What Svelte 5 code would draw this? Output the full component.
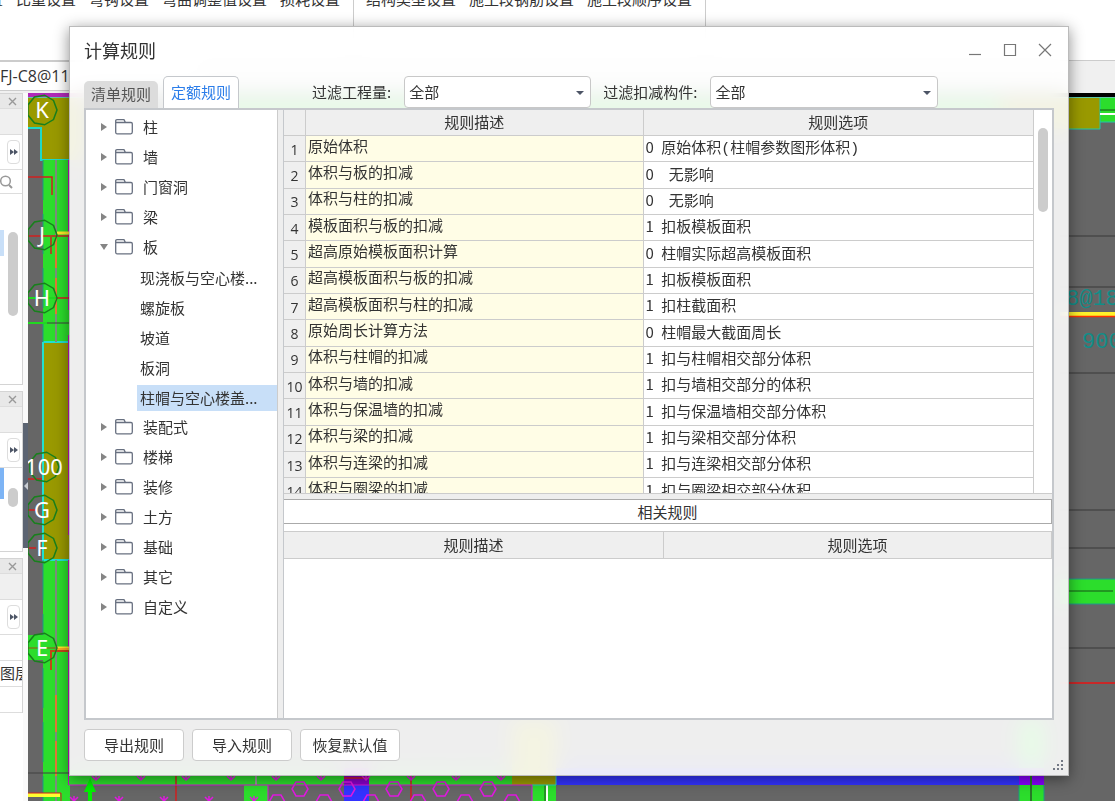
<script>
  // --- Ribbon behind the dialog ---
  const ribbonGroups = [
    ['置', '比重设置', '弯钩设置', '弯曲调整值设置', '损耗设置'],
    ['结构类型设置', '施工段钢筋设置', '施工段顺序设置']
  ];

  // --- Dialog state ---
  let activeTab = $state('定额规则');
  let quantity = $state('全部');
  let component = $state('全部');
  let selected = $state('柱帽与空心楼盖...');

  const tabs = ['清单规则', '定额规则'];
  const footer = ['导出规则', '导入规则', '恢复默认值'];

  let tree = $state([
    { name: '柱' },
    { name: '墙' },
    { name: '门窗洞' },
    { name: '梁' },
    {
      name: '板',
      open: true,
      children: ['现浇板与空心楼...', '螺旋板', '坡道', '板洞', '柱帽与空心楼盖...']
    },
    { name: '装配式' },
    { name: '楼梯' },
    { name: '装修' },
    { name: '土方' },
    { name: '基础' },
    { name: '其它' },
    { name: '自定义' }
  ]);

  // description, option code, indent of the option in half characters, option
  const rules = [
    ['原始体积', 0, 1, '原始体积(柱帽参数图形体积)'],
    ['体积与板的扣减', 0, 2, '无影响'],
    ['体积与柱的扣减', 0, 2, '无影响'],
    ['模板面积与板的扣减', 1, 1, '扣板模板面积'],
    ['超高原始模板面积计算', 0, 1, '柱帽实际超高模板面积'],
    ['超高模板面积与板的扣减', 1, 1, '扣板模板面积'],
    ['超高模板面积与柱的扣减', 1, 1, '扣柱截面积'],
    ['原始周长计算方法', 0, 1, '柱帽最大截面周长'],
    ['体积与柱帽的扣减', 1, 1, '扣与柱帽相交部分体积'],
    ['体积与墙的扣减', 1, 1, '扣与墙相交部分的体积'],
    ['体积与保温墙的扣减', 1, 1, '扣与保温墙相交部分体积'],
    ['体积与梁的扣减', 1, 1, '扣与梁相交部分体积'],
    ['体积与连梁的扣减', 1, 1, '扣与连梁相交部分体积'],
    ['体积与圈梁的扣减', 1, 1, '扣与圈梁相交部分体积']
  ];

  // --- Drawing ---
  const axes = [
    { name: 'K', x: 42, y: 110 },
    { name: 'J', x: 42, y: 235 },
    { name: 'H', x: 42, y: 298 },
    { name: '100', x: 44, y: 467 },
    { name: 'G', x: 42, y: 510 },
    { name: 'F', x: 42, y: 548 },
    { name: 'E', x: 42, y: 648 }
  ];
  const gridLines = [236, 287, 373, 510, 548, 648];

  function polygon(cx, cy, r, sides) {
    return Array.from({ length: sides }, (_, i) => {
      const a = (i * 2 * Math.PI) / sides;
      return `${(cx + r * Math.cos(a)).toFixed(1)},${(cy + r * Math.sin(a)).toFixed(1)}`;
    }).join(' ');
  }

  function pick(node) {
    if (node.children) node.open = !node.open;
    else selected = node.name;
  }
</script>

{#snippet panelTop()}
  <div class="panel-head">
    <button aria-label="关闭面板">
      <svg width="9" height="9" viewBox="0 0 9 9"><path d="M1 1l7 7M8 1L1 8" stroke="#999" stroke-width="1.4" fill="none" /></svg>
    </button>
  </div>
  <div class="panel-tabs"></div>
  <div class="panel-tools">
    <button aria-label="更多">
      <svg width="10" height="8" viewBox="0 0 10 8"><path d="M1 1l4 3-4 3zM5 1l4 3-4 3z" fill="#4d5566" /></svg>
    </button>
  </div>
{/snippet}

<div class="desktop">
  <div class="ribbon">
    {#each ribbonGroups as group}
      <div class="group">
        {#each group as item}
          <span>{item}</span>
        {/each}
      </div>
    {/each}
  </div>

  <div class="doc-tabs"><span>FJ-C8@11</span></div>

  <div class="workspace">
    <aside>
      <section class="panel tall">
        {@render panelTop()}
        <div class="search">
          <svg width="14" height="14" viewBox="0 0 14 14" fill="none" stroke="#999">
            <circle cx="5.500" cy="6" r="4.800" stroke-width="1.500" /><path d="M9 10l3 3" stroke-width="2" />
          </svg>
        </div>
        <div class="list first"><i class="mark"></i><i class="thumb"></i></div>
      </section>
      <section class="panel middle">
        {@render panelTop()}
        <div class="list"><i class="mark strong"></i><i class="thumb short"></i></div>
      </section>
      <section class="panel last">
        {@render panelTop()}
        <div class="layer"></div>
        <div class="layer">图层</div>
        <div class="layer"></div>
      </section>
    </aside>
    <div class="gutter">
      <div class="handle">
        <svg width="5" height="8" viewBox="0 0 5 8"><path d="M5 0v8L1 4z" fill="#c8ccd2" /></svg>
      </div>
    </div>

    <div class="drawing">
      <svg viewBox="28 93 1087 708" preserveAspectRatio="xMinYMin slice">
        <rect x="28" y="93" width="1087" height="708" fill="#666" />

        <!-- top band -->
        <rect x="28" y="93" width="1087" height="4" fill="#000" />
        <rect x="28" y="93" width="60" height="4" fill="#b02ab8" />
        <rect x="28" y="97" width="1087" height="2" fill="#5fc9a8" />
        <rect x="200" y="98" width="820" height="26" fill="#2cdd2c" />
        <path d="M28 98H84V160H41V128H28z" fill="#999900" />
        <path d="M28 128H41V160H69" fill="none" stroke="#1fd8c8" stroke-width="2" />

        <!-- left wall -->
        <rect x="43" y="160" width="27" height="182" fill="#2cdd2c" />
        <rect x="43" y="342" width="27" height="218" fill="#999900" />
        <rect x="43" y="560" width="27" height="241" fill="#2cdd2c" />
        <path d="M43 342V560H69M43 342H69" fill="none" stroke="#20e0d0" stroke-width="2" />
        <path d="M43 160V342M43 560V801" stroke="#1a9a80" stroke-dasharray="40 14" />
        <path d="M56 160V342M56 560V801" stroke="#7d8d7d" stroke-width="2" />
        <path d="M56 237V268M56 278V314M56 695V732M56 741V776" stroke="#e07838" stroke-width="2" />
        <path d="M69 160V310M69 335V535M69 560V785" stroke="#c010c0" stroke-width="2" />
        <path d="M28 177H52V195M51 237V254M28 479H42M28 510H36M28 548H36" fill="none" stroke="#d02020" stroke-width="1.5" />
        <path d="M28 298H57M28 323H47" stroke="#20d820" stroke-width="2" />
        <path d="M47 323H69M28 773H69" stroke="#404040" />
        <path d="M57 233H69" stroke="#ffe928" stroke-width="3" />
        <path d="M28 236H69M57 298H69" stroke="#d02020" stroke-width="1.5" />
        <rect x="28" y="635" width="16" height="25" fill="#2cdd2c" />
        <path d="M28 648H57" stroke="#9a5010" />
        <path d="M57 649H69" stroke="#ffe928" stroke-width="5" />
        <path d="M57 649H69" stroke="#f07020" />
        <path d="M51 670V651H69" fill="none" stroke="#c04818" stroke-width="2" />
        <path d="M28 795H60" stroke="#ffff30" stroke-width="4" />
        <path d="M28 793H61V801" fill="none" stroke="#d02020" />

        {#each axes as axis}
          <polygon points={polygon(axis.x, axis.y, 15, 9)} fill="none" stroke="#18801c" stroke-width="1.5" />
          <text class="axis" x={axis.x} y={axis.y + 8}>{axis.name}</text>
        {/each}

        <!-- right side -->
        <rect x="1000" y="98" width="100" height="31" fill="#999900" />
        <rect x="1100" y="98" width="15" height="24" fill="#2cdd2c" />
        <path d="M1100 98V129H1069M1100 122H1115" fill="none" stroke="#1fc8a8" />
        <path d="M1100 110H1115" stroke="#175217" />
        <path d="M1100 114H1115" stroke="#fff" stroke-width="2" />
        <rect x="1060" y="579" width="55" height="25" fill="#2cdd2c" />
        <path d="M1069 579H1115M1069 604H1115" stroke="#20988a" />
        <path d="M1069 591H1113" stroke="#175217" />
        {#each gridLines as y}
          <path d="M1060 {y}H1115" stroke="#383838" />
        {/each}
        <path d="M1060 314H1115" stroke="#fff22a" stroke-width="4" />
        <path d="M1060 316.500H1115" stroke="#ff3000" stroke-width="1.500" />
        <path d="M1060 683H1115" stroke="#c82828" stroke-width="2" />
        <text class="note" x="1066" y="305">8@18</text>
        <text class="note" x="1082" y="348">900</text>

        <!-- bottom band -->
        <rect x="69" y="770" width="444" height="15" fill="#2cdd2c" />
        <rect x="512" y="720" width="44" height="65" fill="#999900" />
        <rect x="556" y="768" width="463" height="17" fill="#3333ff" />
        <rect x="1019" y="720" width="25" height="81" fill="#2cdd2c" />
        <rect x="1019" y="768" width="25" height="17" fill="#8800ff" />
        <path d="M1031 776V801" stroke="#287828" stroke-width="2" />
        <path d="M1019 785V801M1044 785V801" stroke="#1a9a80" />
        <rect x="344" y="768" width="25" height="17" fill="#8800c8" />
        <rect x="344" y="785" width="25" height="16" fill="#3333ff" />
        <rect x="244" y="785" width="24" height="16" fill="#2cdd2c" />
        <rect x="532" y="785" width="24" height="16" fill="#2cdd2c" />
        <path d="M545 785V801" stroke="#205020" />
        <path d="M547 785V801" stroke="#fff" stroke-width="2" />
        <path d="M532 785H556V776" fill="none" stroke="#20d0c0" />
        <path d="M256 776V785" stroke="#999" stroke-width="2" />
        <path d="M176 776V801M411 776V801M344 778H369" stroke="#d02020" stroke-width="1.5" />
        <path d="M69 785H532V801M268 785V801" fill="none" stroke="#d818d8" />
        <g fill="none" stroke="#e018e0" stroke-width="1.5">
          {#each Array.from({ length: 10 }) as _, i}
            <path d="M{96 + i * 45} 772v8m-4 -4l4 4l4 -4" />
          {/each}
          {#each Array.from({ length: 5 }) as _, i}
            <path d="M{74 + i * 45} 796v5m-4 -4l8 8m0 -8l-8 8" />
            <polygon points={polygon(300 + i * 47, 789, 8, 6)} />
          {/each}
          {#each Array.from({ length: 6 }) as _, i}
            <polygon points={polygon(277 + i * 47, 802, 8, 6)} />
          {/each}
        </g>
        <path d="M90 778l6 14h-4v9h-4v-9h-4z" fill="#00f000" />
      </svg>
    </div>
  </div>

  <!-- --- Dialog --- -->
  <div class="dialog" role="dialog" aria-labelledby="title">
    <header>
      <h1 id="title">计算规则</h1>
      <div class="window-buttons">
        <button aria-label="最小化">
          <svg width="14" height="14" viewBox="0 0 14 14"><path d="M1 11.500H13" /></svg>
        </button>
        <button aria-label="最大化">
          <svg width="14" height="14" viewBox="0 0 14 14"><path d="M1.500 1.500h11v11h-11z" /></svg>
        </button>
        <button aria-label="关闭">
          <svg width="14" height="14" viewBox="0 0 14 14"><path d="M1 1l12 12M13 1L1 13" /></svg>
        </button>
      </div>
    </header>

    <div class="bar">
      <div class="tabs" role="tablist">
        {#each tabs as tab}
          <button role="tab" aria-selected={activeTab === tab} class:active={activeTab === tab} onclick={() => (activeTab = tab)}>
            {tab}
          </button>
        {/each}
      </div>
      <label for="quantity">过滤工程量:</label>
      <div class="select">
        <select id="quantity" bind:value={quantity}><option>全部</option></select>
      </div>
      <label for="component">过滤扣减构件:</label>
      <div class="select wide">
        <select id="component" bind:value={component}><option>全部</option></select>
      </div>
    </div>

    <div class="content">
      <ul class="tree">
        {#each tree as node}
          <li>
            <button class="node" onclick={() => pick(node)}>
              <svg class="caret" class:open={node.open} width="6" height="8" viewBox="0 0 6 8"><path d="M0 0l6 4-6 4z" fill="#858585" /></svg>
              <svg width="18" height="16" viewBox="0 0 18 16" fill="none" stroke="#687080">
                <path d="M.7 13V2q0-1.300 1.300-1.300h7l1.500 2.800H16q1.300 0 1.300 1.300V13q0 1.800-1.500 1.800H2.200Q.7 14.800.7 13zM.7 3.500H10.500" stroke-width="1.300" />
              </svg>
              <span>{node.name}</span>
            </button>
            {#if node.open}
              <ul>
                {#each node.children as child}
                  <li class="child">
                    <button class="leaf" class:selected={selected === child} onclick={() => (selected = child)}>{child}</button>
                  </li>
                {/each}
              </ul>
            {/if}
          </li>
        {/each}
      </ul>

      <div class="main">
        <div class="rules">
          <div class="clip">
            <table class="rule-table">
              <colgroup><col class="num" /><col class="desc" /><col /></colgroup>
              <thead>
                <tr><th></th><th>规则描述</th><th>规则选项</th></tr>
              </thead>
              <tbody>
                {#each rules as [desc, code, indent, option], i}
                  <tr>
                    <th scope="row">{i + 1}</th>
                    <td class="desc">{desc}</td>
                    <td><span class="code">{code}{'\u2002'.repeat(indent)}</span>{option}</td>
                  </tr>
                {/each}
              </tbody>
            </table>
          </div>
          <div class="scroll"><div class="scroll-thumb"></div></div>
        </div>

        <div class="caption"><h2>相关规则</h2></div>

        <div class="related">
          <table>
            <colgroup><col class="half" /><col /></colgroup>
            <thead>
              <tr><th>规则描述</th><th>规则选项</th></tr>
            </thead>
          </table>
        </div>
      </div>
    </div>

    <footer>
      {#each footer as label}
        <button>{label}</button>
      {/each}
    </footer>

    <svg class="grip" width="11" height="11" viewBox="0 0 11 11">
      <path d="M8 0h2v2h-2zM4 4h2v2h-2zM8 4h2v2h-2zM0 8h2v2h-2zM4 8h2v2h-2zM8 8h2v2h-2z" fill="#737985" />
    </svg>
  </div>
</div>

<style>
  :global(body) { margin: 0; overflow: hidden; }
  * { box-sizing: border-box; }
  button { padding: 0; border: none; background: none; color: inherit; font: inherit; cursor: pointer; }
  ul { list-style: none; margin: 0; padding: 0; }

  .desktop {
    position: relative;
    display: flex;
    flex-direction: column;
    height: 100vh;
    overflow: hidden;
    background: #fff;
    color: #333;
    font: 15px/20px "Noto Sans CJK SC", sans-serif;
  }

  /* ribbon and document tabs */
  .ribbon { display: flex; flex: none; height: 61px; overflow: hidden; border-bottom: 1px solid #ccc; }
  .group { display: flex; gap: 13px; padding: 0 13px 0 12px; border-right: 1px solid #ccc; white-space: nowrap; }
  .group:first-child { padding-left: 0; margin-left: -12px; }
  .group span { margin-top: -11px; }
  .doc-tabs { display: flex; flex: none; height: 32px; background: #f0f0f0; }
  .doc-tabs span { width: 200px; height: 30px; border: solid #ccc; border-width: 1px 0; background: #fff; font: 16px/28px "Open Sans", sans-serif; }

  .workspace { display: flex; flex: 1; min-height: 0; }
  aside { flex: none; width: 23px; overflow: hidden; }
  .panel { border: solid #d4d4d4; border-width: 1px 1px 1px 0; margin-bottom: 6px; overflow: hidden; }
  .tall { height: 292px; }
  .middle { height: 161px; }
  .last { border-bottom: none; }
  .panel-head { display: flex; justify-content: flex-end; align-items: center; height: 14px; padding-right: 5px; background: #e8e8e8; }
  .panel-head button, .panel-tools button { display: flex; align-items: center; justify-content: center; }
  .panel-tabs { height: 27px; border: solid #ddd; border-width: 1px 0; background: #f0f0f0; }
  .panel-tools { display: flex; justify-content: flex-end; align-items: center; height: 35px; padding-right: 2px; border-bottom: 1px solid #ddd; }
  .panel-tools button { width: 13px; height: 24px; border: 1px solid #ddd; border-radius: 4px; }
  .search { height: 24px; padding-top: 5px; border-bottom: 1px solid #ddd; }
  .search svg { display: block; }
  .list { display: flex; gap: 4px; }
  .first { padding-top: 36px; }
  .mark { width: 4px; height: 26px; background: #c8dff8; }
  .strong { height: 31px; background: #7db4f5; }
  .thumb { width: 10px; height: 84px; margin-top: 2px; border-radius: 5px; background: #ccc; }
  .short { height: 19px; margin-top: 20px; }
  .layer { height: 26px; line-height: 24px; border-bottom: 1px solid #ddd; white-space: nowrap; overflow: hidden; }
  .gutter { flex: none; width: 5px; padding-top: 330px; background: #fafafa; }
  .handle { display: flex; align-items: center; height: 125px; background: #5c6472; }
  .drawing { flex: 1; min-width: 0; }
  .drawing svg { display: block; width: 100%; height: 100%; }
  .axis { fill: #fff; font: 22px "Noto Sans", sans-serif; text-anchor: middle; }
  .note { fill: #128d88; font: 22px "Liberation Mono", monospace; }

  /* dialog */
  .dialog {
    position: absolute;
    inset: 26px 46px 25px 69px;
    display: flex;
    flex-direction: column;
    padding: 0 14px 14px;
    border: 1px solid #bbb;
    background: rgba(255, 255, 255, 0.89);
    backdrop-filter: blur(10px);
    box-shadow: 0 3px 14px rgba(0, 0, 0, 0.45);
  }
  header { display: flex; flex: none; justify-content: space-between; height: 49px; margin-right: -8px; }
  h1 { margin: 0; font-size: 18px; line-height: 46px; font-weight: 400; }
  .window-buttons { display: flex; align-items: center; height: 46px; }
  .window-buttons button { display: flex; align-items: center; justify-content: center; width: 35px; height: 30px; }
  .window-buttons svg { fill: none; stroke: #777; stroke-width: 1.2; }

  .bar { display: flex; flex: none; align-items: center; height: 32px; }
  .tabs { display: flex; gap: 5px; align-items: flex-end; align-self: stretch; margin-right: 73px; }
  .tabs button { height: 27px; padding: 0 7px 2px; border-radius: 5px 5px 0 0; background: #dcdcdc; color: #555; }
  .tabs .active { height: 32px; border: 1px solid #c5c8cc; border-bottom: none; background: #fff; color: #2b7de9; }
  .bar label { margin-right: 13px; }
  .select { position: relative; width: 187px; height: 32px; margin-right: 12px; }
  .wide { width: 228px; }
  .select::after {
    content: "";
    position: absolute;
    right: 7px;
    top: 15px;
    border: 4px solid transparent;
    border-top-color: #4d5566;
    border-bottom: none;
    pointer-events: none;
  }
  select { appearance: none; width: 100%; height: 100%; padding: 0 4px; border: 1px solid #c8c8c8; border-radius: 4px; background: #fff; color: #333; font: inherit; }

  .content { display: flex; flex: 1; min-height: 0; border: 2px solid #c5c8cc; background: #eee; }
  .tree { flex: none; width: 192px; padding-top: 2px; border-right: 1px solid #ccc; background: #fff; overflow: hidden; }
  .node { display: flex; align-items: center; width: 100%; height: 30px; padding-left: 15px; }
  .caret { margin-right: 8px; }
  .open { transform: rotate(90deg); }
  .node span { margin-left: 10px; }
  .child { height: 30px; padding: 3px 0 1px 51px; }
  .leaf { display: block; width: 140px; height: 26px; padding-left: 3px; text-align: left; white-space: nowrap; }
  .leaf.selected { background: #c8dff8; }

  .main { display: flex; flex: 1; flex-direction: column; min-width: 0; margin-left: 5px; border-left: 1px solid #c5c8cc; background: #fff; }
  .rules { display: flex; flex: 1; min-height: 0; border-bottom: 1px solid #ccc; }
  .clip { flex: 1; min-width: 0; overflow: hidden; }
  .scroll { width: 18px; padding: 18px 4px 0; }
  .scroll-thumb { height: 84px; border-radius: 5px; background: #ccc; }
  table { width: 100%; border-collapse: separate; border-spacing: 0; table-layout: fixed; }
  .rule-table { height: 395px; }
  .num { width: 22px; }
  col.desc { width: 45%; }
  .half { width: 380px; }
  th, td { padding: 0; border: solid #ccc; border-width: 0 1px 1px 0; font-weight: 400; white-space: nowrap; overflow: hidden; }
  th { background: #efefef; }
  thead th { height: 26px; padding-bottom: 2px; line-height: 20px; }
  tbody th { padding: 2px 0 0; font: 14px/20px "Open Sans", sans-serif; }
  td { padding: 0 2px; line-height: 20px; font-family: "Liberation Mono", "Noto Sans CJK SC", monospace; }
  td.desc { background: #fffde6; }
  .code { font-family: "Noto Sans CJK SC", sans-serif; white-space: pre; }
  .caption { flex: none; height: 37px; padding: 5px 0 7px; background: linear-gradient(#eee 5px, #fff 5px); }
  h2 { height: 25px; margin: 0; border: 1px solid #aaa; border-left: none; font-size: 15px; line-height: 23px; font-weight: 400; text-align: center; }
  .related { flex: none; height: 187px; }
  .related th { height: 28px; padding-bottom: 0; border-top-width: 1px; }

  footer { display: flex; flex: none; gap: 8px; margin-top: 9px; }
  footer button { width: 100px; height: 32px; border: 1px solid #ccc; border-radius: 4px; background: #fff; }
  .grip { position: absolute; right: 4px; bottom: 4px; }
</style>
